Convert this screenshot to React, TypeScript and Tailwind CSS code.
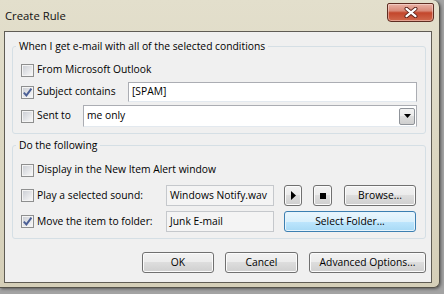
import React from 'react'

const Checkbox: React.FC<{ checked?: boolean }> = ({ checked }) => (
  <span className="flex h-[13px] w-[13px] shrink-0 border border-[#8e8f8f] bg-[#f4f4f4] p-[1px]">
    <span className="flex flex-1 items-center justify-center bg-[linear-gradient(135deg,#cdd0d6_0%,#f7f7f7_100%)]">
      {checked && (
        <svg width="9" height="9" viewBox="0 0 9 9" className="overflow-visible">
          <path d="M0.8 4.6 L3.4 7.4 L8.4 0.6" fill="none" stroke="#4b5f95" strokeWidth="1.9" />
        </svg>
      )}
    </span>
  </span>
)

interface ButtonProps {
  children: React.ReactNode
  className?: string
  active?: boolean
}

const Button: React.FC<ButtonProps> = ({ children, className = '', active }) => (
  <div
    className={`flex h-full items-center justify-center rounded-[3px] border ${
      active
        ? 'border-[#3c7fb1] bg-[linear-gradient(to_bottom,#eaf6fd_0%,#d9f0fc_50%,#bee6fd_50%,#a7d9f5_100%)] shadow-[inset_0_0_0_1px_#e6f4fc]'
        : 'border-[#707070] bg-[linear-gradient(to_bottom,#f2f2f2_0%,#ebebeb_50%,#dddddd_50%,#cfcfcf_100%)] shadow-[inset_0_0_0_1px_#fbfbfb]'
    } ${className}`}
  >
    {children}
  </div>
)

const Field: React.FC<{ children: React.ReactNode; className?: string; readOnly?: boolean }> = ({
  children,
  className = '',
  readOnly,
}) => (
  <div
    className={`flex h-full items-center border px-[3px] ${
      readOnly ? 'border-[#c5c8cc] bg-[#f4f4f4]' : 'border-[#abadb3] border-b-[#e3e9ef] bg-white'
    } ${className}`}
  >
    {children}
  </div>
)

const Group: React.FC<{ title: string; children: React.ReactNode; className?: string }> = ({
  title,
  children,
  className = '',
}) => (
  <fieldset className={`rounded-[3px] border border-[#d5dfe5] px-[8px] pb-[6px] ${className}`}>
    <legend className="ml-[-5px] px-[3px] leading-[15px]">{title}</legend>
    {children}
  </fieldset>
)

export default function App() {
  return (
    <div className="h-[294px] w-[444px] overflow-hidden bg-[#a3a3a3] font-['Open_Sans',sans-serif] text-[10.3px] text-black">
      <div className="flex h-[288px] w-[440px] flex-col rounded-tr-[7px] rounded-br-[6px] border-r border-b border-[#55524a] bg-[linear-gradient(to_bottom,#e3dfcc,#d5cfb8)] pl-[4px] shadow-[1px_1px_3px_rgba(0,0,0,0.45)]">
        {/* title bar */}
        <div className="flex h-[31px] shrink-0 items-start">
          <span className="mt-[8px] pl-[1px] text-[11.3px] leading-[16px] text-[#111]">Create Rule</span>
          <div className="ml-auto mr-[5px] mt-[3px] flex h-[19px] w-[47px] items-center justify-center rounded-t-[2px] rounded-b-[4px] border border-[#5e2d22] bg-[linear-gradient(to_bottom,#eab2a5_0%,#d98a78_40%,#c3462c_52%,#d0694d_100%)] shadow-[inset_0_0_0_1px_rgba(255,235,230,0.45)]">
            <svg width="14" height="11" viewBox="0 0 14 11">
              <path d="M2.5 1.8 L11.5 9.2 M11.5 1.8 L2.5 9.2" stroke="#5a2118" strokeWidth="4" strokeLinecap="round" />
              <path d="M2.5 1.8 L11.5 9.2 M11.5 1.8 L2.5 9.2" stroke="#ffffff" strokeWidth="2.2" strokeLinecap="round" />
            </svg>
          </div>
        </div>

        {/* client area */}
        <div className="flex h-[252px] w-[428px] flex-col border border-[#5f5c54] bg-[#f0f0f0] pl-[7px] pr-[5px]">
          <Group title="When I get e-mail with all of the selected conditions" className="mt-[7px]">
            <div className="mt-[6px] flex h-[20px] items-center">
              <Checkbox />
              <span className="ml-[3px]">From Microsoft Outlook</span>
            </div>
            <div className="mt-[2px] flex h-[20px] items-center">
              <Checkbox checked />
              <span className="w-[94px] shrink-0 pl-[3px]">Subject contains</span>
              <Field className="flex-1">[SPAM]</Field>
            </div>
            <div className="mt-[3px] flex h-[22px] items-center">
              <Checkbox />
              <span className="w-[49px] shrink-0 pl-[3px]">Sent to</span>
              <Field className="flex-1 pr-[1px]">
                <span className="flex-1">me only</span>
                <div className="flex h-[17px] w-[16px] items-center justify-center rounded-[2px] border border-[#8f9399] bg-[linear-gradient(to_bottom,#f2f2f2_0%,#ebebeb_50%,#dddddd_50%,#cfcfcf_100%)]">
                  <svg width="7" height="4" viewBox="0 0 7 4">
                    <path d="M0 0 L7 0 L3.5 4 Z" fill="#000" />
                  </svg>
                </div>
              </Field>
            </div>
          </Group>

          <Group title="Do the following" className="mt-[4px]">
            <div className="mt-[7px] flex h-[20px] items-center">
              <Checkbox />
              <span className="ml-[3px]">Display in the New Item Alert window</span>
            </div>
            <div className="mt-[5px] flex h-[21px] items-center">
              <Checkbox />
              <span className="w-[132px] shrink-0 pl-[3px]">Play a selected sound:</span>
              <Field readOnly className="w-[108px]">Windows Notify.wav</Field>
              <Button className="ml-[10px] w-[18px]">
                <svg width="5" height="9" viewBox="0 0 5 9">
                  <path d="M0 0 L5 4.5 L0 9 Z" fill="#000" />
                </svg>
              </Button>
              <Button className="ml-[11px] w-[19px]">
                <span className="h-[6px] w-[6px] bg-black" />
              </Button>
              <Button className="ml-[12px] w-[72px]">Browse...</Button>
            </div>
            <div className="mt-[5px] flex h-[21px] items-center">
              <Checkbox checked />
              <span className="w-[132px] shrink-0 pl-[3px]">Move the item to folder:</span>
              <Field readOnly className="w-[108px]">Junk E-mail</Field>
              <Button active className="ml-[10px] w-[132px]">Select Folder...</Button>
            </div>
          </Group>

          <div className="mt-[13px] flex h-[21px] justify-end">
            <Button className="w-[72px]">OK</Button>
            <Button className="ml-[11px] w-[73px]">Cancel</Button>
            <Button className="ml-[11px] w-[117px]">Advanced Options...</Button>
          </div>
        </div>
      </div>
    </div>
  )
}
